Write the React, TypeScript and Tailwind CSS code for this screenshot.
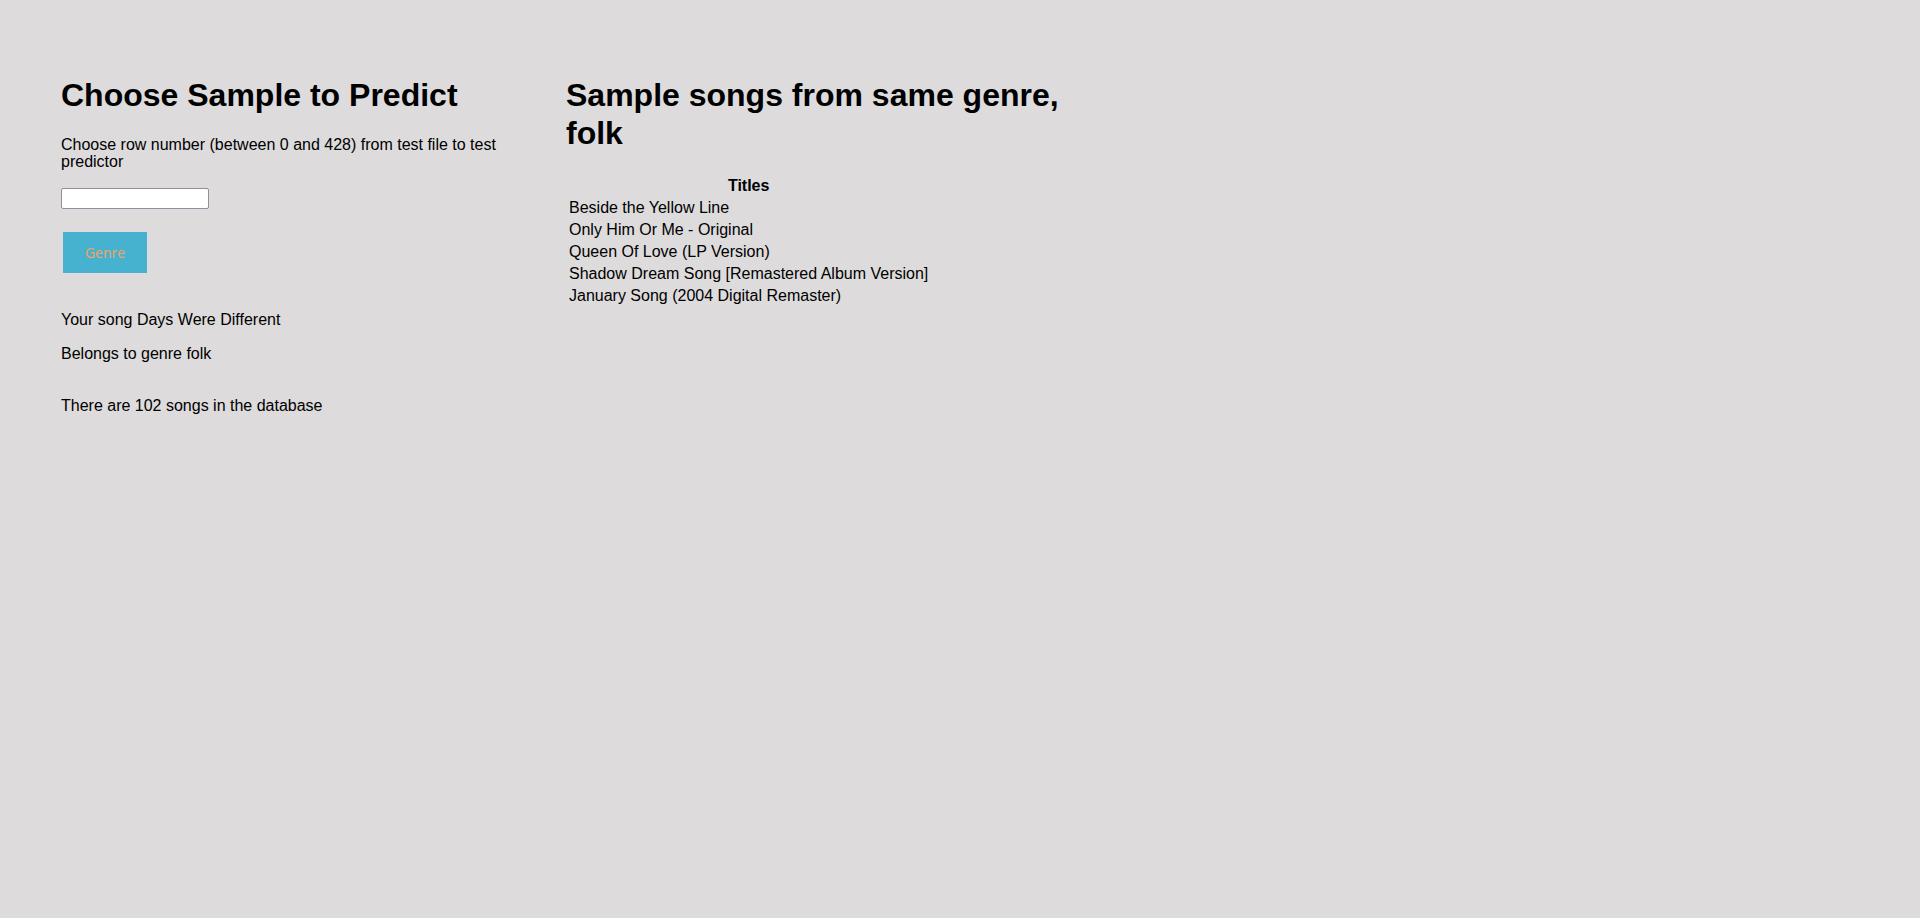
import { useState } from "react";

const songs = [
  "Beside the Yellow Line",
  "Only Him Or Me - Original",
  "Queen Of Love (LP Version)",
  "Shadow Dream Song [Remastered Album Version]",
  "January Song (2004 Digital Remaster)",
];

export default function App() {
  const [row, setRow] = useState("");

  return (
    <div className="min-h-[918px] w-full bg-[#dddbdc] text-black font-['Liberation_Sans',Arial,sans-serif]">
      <div className="flex pl-[61px] pt-[76px] gap-[25px]">
        {/* left: predictor form */}
        <div className="w-[480px] shrink-0">
          <h1 className="text-[32px] leading-[38px] font-bold">Choose Sample to Predict</h1>
          <p className="mt-[22px] text-[16px] leading-[17px]">
            Choose row number (between 0 and 428) from test file to test predictor
          </p>
          <input
            type="text"
            value={row}
            onChange={(e) => setRow(e.target.value)}
            className="mt-[18px] block w-[148px] h-[21px] bg-white border border-[#8f8f9d] rounded-[2px] px-1 text-[13px] outline-none"
          />
          <button className="mt-[23px] ml-[2px] block w-[84px] h-[41px] bg-[#46b2d0] text-[#f4a460] text-[14px] font-['Open_Sans',Arial,sans-serif]">
            Genre
          </button>
          <p className="mt-[38px] text-[16px] leading-[18px]">Your song Days Were Different</p>
          <p className="mt-[16px] text-[16px] leading-[18px]">Belongs to genre folk</p>
          <p className="mt-[34px] text-[16px] leading-[18px]">There are 102 songs in the database</p>
        </div>

        {/* right: songs of same genre */}
        <div className="w-[500px] shrink-0">
          <h1 className="text-[32px] leading-[38px] font-bold">Sample songs from same genre, folk</h1>
          <table className="mt-[22px] border-separate border-spacing-[2px] text-[16px] leading-[18px]">
            <thead>
              <tr>
                <th className="p-px font-bold text-center">Titles</th>
              </tr>
            </thead>
            <tbody>
              {songs.map((s) => (
                <tr key={s}>
                  <td className="p-px">{s}</td>
                </tr>
              ))}
            </tbody>
          </table>
        </div>
      </div>
    </div>
  );
}
